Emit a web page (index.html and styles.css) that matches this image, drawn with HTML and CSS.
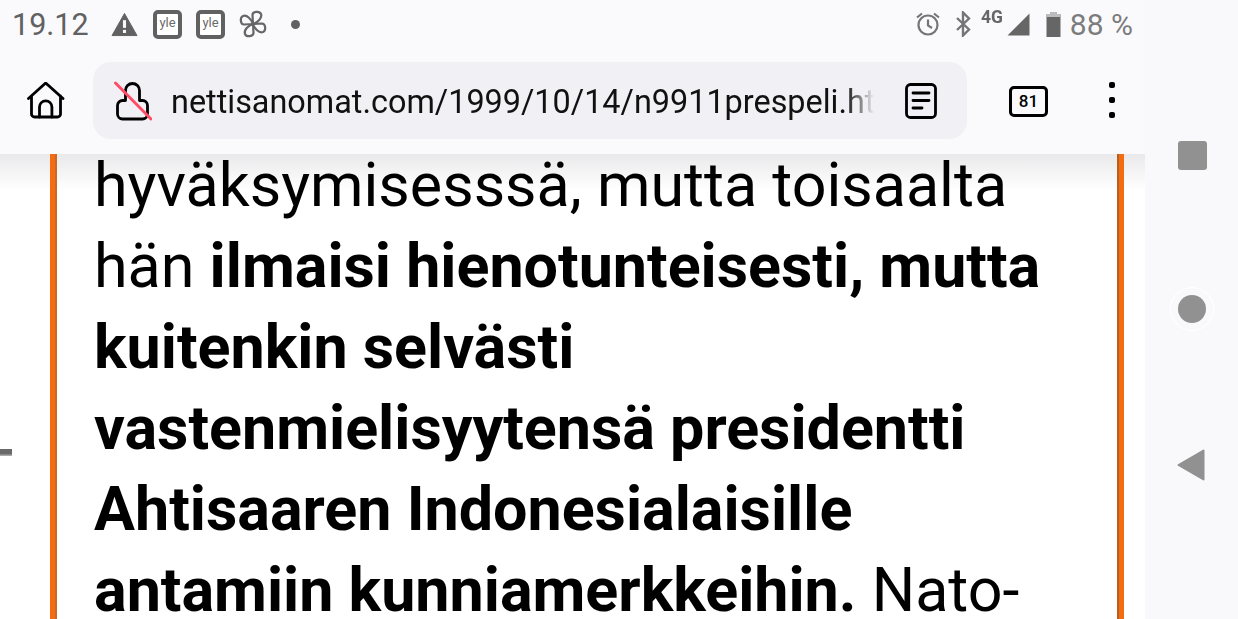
FILE: index.html
```html
<!DOCTYPE html>
<html lang="fi">
<head>
<meta charset="utf-8">
<title>nettisanomat.com</title>
<link rel="stylesheet" href="styles.css">
</head>
<body>
<div class="screen">
  <main class="browser">
    <header class="chrome">
      <div class="status">
        <div class="status-left">
          <span class="time">19.12</span>
          <svg class="ic warn" viewBox="0 0 28 26"><path d="M14 1.500 27 24.500H1z" fill="#616161" stroke="#616161" stroke-linejoin="round"/><rect x="12.400" y="8.500" width="3.200" height="8" fill="#fafafd"/><rect x="12.400" y="18.600" width="3.200" height="3.200" fill="#fafafd"/></svg>
          <span class="yle">yle</span>
          <span class="yle">yle</span>
          <svg class="ic fan" viewBox="0 0 28 28" fill="none" stroke="#666" stroke-width="2.200" stroke-linejoin="round"><path d="M14 14 13.500 5C13.500 1.500 20.500 .5 22 4 23.500 8 18.500 12.500 14 14Z"/><path d="M14 14 13.500 5C13.500 1.500 20.500 .5 22 4 23.500 8 18.500 12.500 14 14Z" transform="rotate(90 14 14)"/><path d="M14 14 13.500 5C13.500 1.500 20.500 .5 22 4 23.500 8 18.500 12.500 14 14Z" transform="rotate(180 14 14)"/><path d="M14 14 13.500 5C13.500 1.500 20.500 .5 22 4 23.500 8 18.500 12.500 14 14Z" transform="rotate(270 14 14)"/></svg>
          <span class="dot"></span>
        </div>
        <div class="status-right">
          <svg class="ic alarm" viewBox="0 0 26 26" fill="none" stroke="#757575" stroke-width="2.200"><circle cx="13" cy="14" r="9.500"/><path d="M13 8.500V14.500L17 17M2 6.500 7 2.500M24 6.500 19 2.500"/></svg>
          <svg class="ic bt" viewBox="0 0 16 26" fill="none" stroke="#757575" stroke-width="2.400"><path d="M2 7 14 18.500 8 24.500V1.500L14 7.500 2 19"/></svg>
          <span class="net">4G</span>
          <svg class="ic signal" viewBox="0 0 23 23"><path d="M22.500.5V22.500H.5z" fill="#666"/></svg>
          <svg class="ic batt" viewBox="0 0 15 25"><path d="M4.500 0h6v2h4v23H.5V2h4z" fill="#666"/><path d="M4.500 0h6v2h4v3H.5V2h4z" fill="#bdbdbd"/></svg>
          <span class="pct">88 %</span>
        </div>
      </div>
      <div class="toolbar">
        <svg class="ic home" viewBox="0 0 38 38" fill="none" stroke="#000" stroke-width="2.800" stroke-linejoin="round" stroke-linecap="round"><path d="M1.500 16.500 18.700 1 36 16.500M4.500 14V32a3 3 0 0 0 3 3h23a3 3 0 0 0 3-3V14"/><path d="M12.500 35V25a6.200 6.200 0 0 1 12.400 0V35"/></svg>
        <div class="omnibox">
          <svg class="ic lock" viewBox="0 0 38 40" fill="none"><path d="M3.500 33V24.500a5 5 0 0 1 5-5H11.500V9.500a7 7 0 0 1 14 0V19.500h3a5 5 0 0 1 5 5V33a5 5 0 0 1-5 5H8.500a5 5 0 0 1-5-5z" stroke="#000" stroke-width="2.800" stroke-linejoin="round"/><path d="M1.500 2 37 38" stroke="#ff4d67" stroke-width="3" stroke-linecap="round"/></svg>
          <span class="url">nettisanomat.com/1999/10/14/n9911prespeli.htm</span>
          <svg class="ic reader" viewBox="0 0 32 36" fill="none" stroke="#000" stroke-width="2.800" stroke-linecap="round"><rect x="1.500" y="1.500" width="29" height="33" rx="4"/><path d="M8 10H24M8 17.500H24M8 25H17"/></svg>
        </div>
        <span class="tabs">81</span>
        <span class="menu"><i></i><i></i><i></i></span>
      </div>
    </header>
    <article class="page">
      <div class="shade"></div>
      <span class="mark"></span>
      <div class="box">
        <p class="text">hyväksymisesssä, mutta toisaalta<br>hän <b>ilmaisi hienotunteisesti, mutta<br>kuitenkin selvästi<br>vastenmielisyytensä presidentti<br>Ahtisaaren Indonesialaisille<br>antamiin kunniamerkkeihin.</b> Nato-</p>
      </div>
    </article>
  </main>
  <nav class="nav">
    <span class="square"></span>
    <span class="circle"></span>
    <svg class="back" viewBox="0 0 28 32"><path d="M26.500 1.500V30.500L1.500 16z" fill="#919191" stroke="#919191" stroke-width="2" stroke-linejoin="round"/></svg>
  </nav>
</div>
</body>
</html>
```

FILE: styles.css
```css
* { box-sizing: border-box; }
html, body { margin: 0; height: 100%; overflow: hidden; }
body { background: #f9f9fc; font-family: Roboto, sans-serif; }
.screen { display: grid; grid-template-columns: 1145px 93px; height: 619px; overflow: hidden; }
.browser { display: flex; flex-direction: column; height: 619px; min-width: 0; }
.chrome { height: 154px; flex: none; background: #fafafd; position: relative; z-index: 2; }
.ic { display: block; flex: none; }

.status { height: 50px; display: flex; justify-content: space-between; align-items: center; padding: 0 12px 2px 12px; }
.status-left, .status-right { display: flex; align-items: center; }
.time { font-size: 30.500px; color: #616161; width: 99px; }
.warn { width: 27px; height: 25px; margin-right: 15px; }
.yle { width: 29px; height: 29px; border: 4px solid #616161; border-radius: 5px; background: #fff; color: #6a6a6a; font-size: 13px; line-height: 18px; text-align: center; margin-right: 14px; }
.fan { width: 28px; height: 28px; margin-right: 24px; }
.dot { width: 9px; height: 9px; border-radius: 50%; background: #616161; }

.status-right { color: #757575; }
.alarm { width: 26px; height: 26px; margin-right: 14px; }
.bt { width: 16px; height: 26px; margin-right: 10px; }
.net { font-size: 19px; font-weight: 700; color: #666; margin: -16px 5px 0 0; transform: scaleX(.92); transform-origin: left; width: 21px; white-space: nowrap; }
.signal { width: 23px; height: 23px; margin-right: 16px; }
.batt { width: 15px; height: 25px; margin-right: 9px; }
.pct { font-size: 30px; color: #7c7c7c; }

.toolbar { height: 104px; display: flex; align-items: flex-start; padding: 12px 0 0 27px; }
.home { width: 38px; height: 38px; margin: 20px 28px 0 0; }
.omnibox { width: 874px; height: 77px; background: #f0f0f5; border-radius: 18px; display: flex; align-items: center; padding: 0 28px 0 21px; }
.lock { width: 38px; height: 40px; margin-right: 19px; }
.url { font-size: 32.400px; color: #111; width: 703px; padding-top: 3px; overflow: hidden; white-space: nowrap; margin-right: 31px; -webkit-mask-image: linear-gradient(to right, #000 96%, transparent); mask-image: linear-gradient(to right, #000 96%, transparent); }
.reader { width: 32px; height: 36px; }
.tabs { width: 39px; height: 31px; margin: 24px 0 0 42px; border: 3px solid #000; border-radius: 5px; font-size: 17px; font-weight: 500; line-height: 25px; text-align: center; color: #000; }
.menu { display: flex; flex-direction: column; gap: 9px; margin: 20px 0 0 61px; }
.menu i { width: 6px; height: 6px; border-radius: 2px; background: #000; }

.page { flex: 1; min-height: 0; background: #fff; position: relative; overflow: hidden; padding: 0 21px 0 50px; }
.shade { position: absolute; left: 0; right: 0; top: 0; height: 36px; background: linear-gradient(#e9e9eb, rgba(255,255,255,0)); }
.mark { position: absolute; left: 0; top: 295px; width: 12px; height: 7px; background: linear-gradient(#6a6a6a 65%, #bbb); }
.box { display: flow-root; position: relative; height: 100%; border-left: 5px solid #f56c10; border-right: 5px solid #f56c10; padding: 0 0 0 39px; box-shadow: inset 2px 0 #c8692a, inset -2px 0 #b5601f; }
.text { margin: -9px 0 0; font-size: 61px; line-height: 81px; color: #000; white-space: nowrap; }
.text b { font-weight: 700; }

.nav { display: flex; flex-direction: column; align-items: center; background: #f9f9fc; }
.square { width: 29px; height: 29px; background: #919191; border-radius: 3px; margin: 141px 0 0 1px; }
.circle { width: 28px; height: 28px; background: #919191; border-radius: 50%; margin: 125px 0 0; box-shadow: 0 0 0 7px #f9f9fc, 0 0 0 8px #fff; }
.back { width: 28px; height: 32px; margin: 126px 2px 0 0; }
```
